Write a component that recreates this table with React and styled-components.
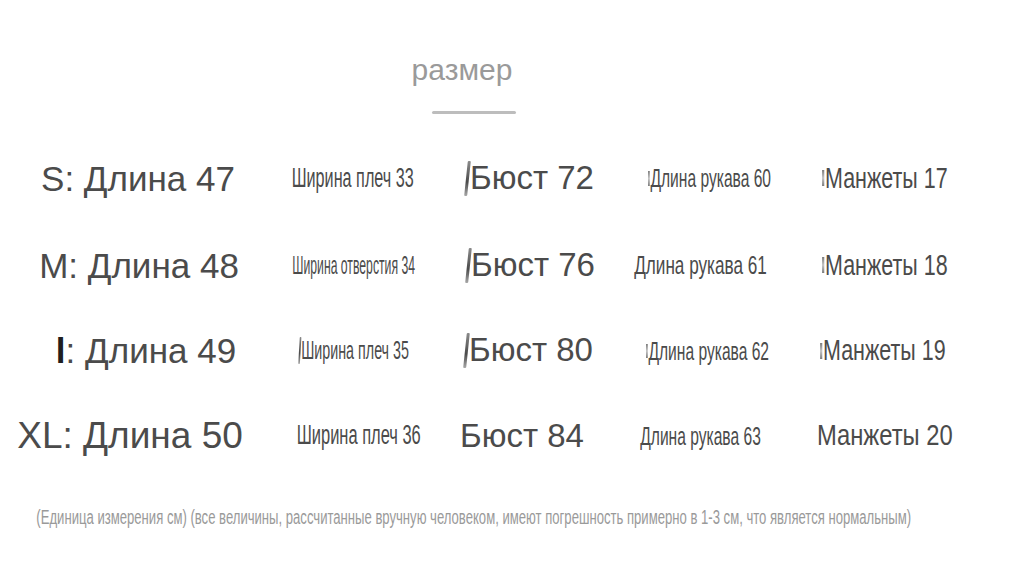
import React from 'react';
import styled, { createGlobalStyle } from 'styled-components';

const GlobalStyle = createGlobalStyle`
  html, body {
    margin: 0;
    padding: 0;
    background: #ffffff;
  }
  body {
    font-family: "Liberation Sans", Arial, sans-serif;
  }
`;

// size: font size, squeeze: horizontal scale of the scanned lettering, dx: drift from column centre
const rows = [
  [
    { text: 'S: Длина 47', size: 35, squeeze: 1, dx: 3 },
    { text: 'Ширина плеч 33', size: 27, squeeze: 0.6 },
    { text: 'Бюст 72', size: 33, squeeze: 1, mark: true },
    { text: 'Длина рукава 60', size: 26, squeeze: 0.6, dot: true, dx: 2 },
    { text: 'Манжеты 17', size: 29, squeeze: 0.74, dot: true },
  ],
  [
    { text: 'M: Длина 48', size: 35, squeeze: 1, dx: 4 },
    { text: 'Ширина отверстия 34', size: 26, squeeze: 0.47, dx: 1 },
    { text: 'Бюст 76', size: 33, squeeze: 1, mark: true, dx: 1 },
    { text: 'Длина рукава 61', size: 26, squeeze: 0.66, dx: -7 },
    { text: 'Манжеты 18', size: 29, squeeze: 0.74, dot: true },
  ],
  [
    { lead: 'l', text: ': Длина 49', size: 35, squeeze: 1, dx: 11 },
    { text: 'Ширина плеч 35', size: 26, squeeze: 0.55, mark: true, dx: 1 },
    { text: 'Бюст 80', size: 33, squeeze: 1, mark: true, dx: -1 },
    { text: 'Длина рукава 62', size: 26, squeeze: 0.6, dot: true },
    { text: 'Манжеты 19', size: 29, squeeze: 0.74, dot: true, dx: -2 },
  ],
  [
    { text: 'XL: Длина 50', size: 37, squeeze: 1, dx: -5 },
    { text: 'Ширина плеч 36', size: 27, squeeze: 0.61, dx: 6 },
    { text: 'Бюст 84', size: 33, squeeze: 1, dx: -8 },
    { text: 'Длина рукава 63', size: 26, squeeze: 0.6, dx: -7 },
    { text: 'Манжеты 20', size: 29, squeeze: 0.82 },
  ],
];

export default function App() {
  return (
    <>
      <GlobalStyle />
      <Page>
        <Header>
          <Title>размер</Title>
          <Rule />
        </Header>
        <Table>
          {rows.map((row, r) =>
            row.map((cell, c) => (
              <Cell key={`${r}-${c}`}>
                <Label $size={cell.size} $squeeze={cell.squeeze} $dx={cell.dx || 0}>
                  {cell.mark && <Mark />}
                  {cell.dot && <Dot />}
                  {cell.lead && <Lead>{cell.lead}</Lead>}
                  {cell.text}
                </Label>
              </Cell>
            ))
          )}
        </Table>
        <Note>
          <NoteText>
            (Единица измерения см) (все величины, рассчитанные вручную человеком, имеют погрешность примерно в 1-3 см, что является нормальным)
          </NoteText>
        </Note>
      </Page>
    </>
  );
}

const Page = styled.div`
  width: 1036px;
  height: 569px;
  display: flex;
  flex-direction: column;
  background: #fff;
  overflow: hidden;
`;

const Header = styled.div`
  width: 924px;
  padding-top: 54px;
  display: flex;
  flex-direction: column;
  align-items: center;
`;

const Title = styled.div`
  font-size: 30px;
  line-height: 32px;
  color: #9a9a9a;
`;

const Rule = styled.div`
  margin-top: 25px;
  margin-left: 24px;
  width: 84px;
  height: 3px;
  border-radius: 2px;
  background: #bdbdbd;
`;

const Table = styled.div`
  margin-top: 20px;
  display: grid;
  grid-template-columns: 270px 165px 190px 165px 190px;
  grid-template-rows: 88px 86px 85px;
  grid-auto-rows: 85px;
`;

const Cell = styled.div`
  display: flex;
  align-items: center;
  justify-content: center;
`;

const Label = styled.span`
  display: inline-block;
  white-space: nowrap;
  font-size: ${(p) => p.$size}px;
  line-height: 1;
  color: #4b4b4b;
  transform: translateX(${(p) => p.$dx}px) scaleX(${(p) => p.$squeeze});
  transform-origin: center;
`;

const Lead = styled.span`
  font-weight: bold;
  color: #1f1f1f;
`;

const Mark = styled.span`
  display: inline-block;
  width: 3px;
  height: 1.05em;
  margin-right: 1px;
  vertical-align: -0.2em;
  background: linear-gradient(#777, #2a2a2a 60%, #999);
  border-radius: 1px;
  transform: skewX(-6deg);
  opacity: 0.85;
`;

const Dot = styled.span`
  display: inline-block;
  width: 3px;
  height: 0.55em;
  margin-right: 1px;
  vertical-align: 0.05em;
  background: linear-gradient(#444, #aaa 50%, #444);
  opacity: 0.7;
`;

const Note = styled.div`
  margin-top: 29px;
  width: 948px;
  display: flex;
  justify-content: center;
`;

const NoteText = styled.span`
  display: inline-block;
  white-space: nowrap;
  font-size: 20px;
  line-height: 1;
  color: #9a9a9a;
  transform: scaleX(0.655);
  transform-origin: center;
`;
